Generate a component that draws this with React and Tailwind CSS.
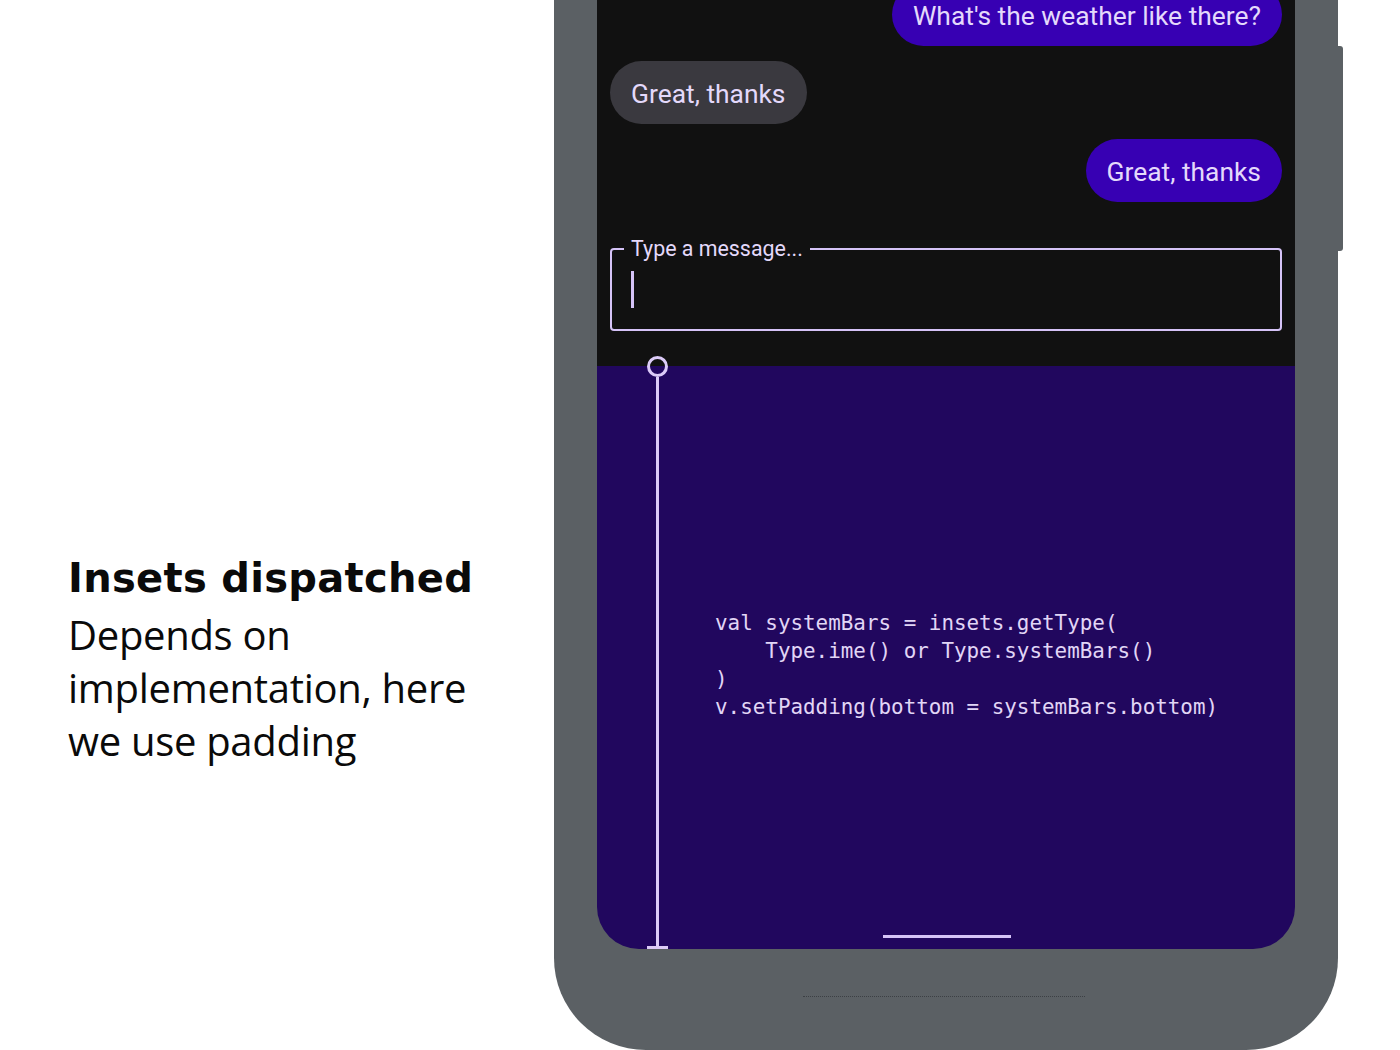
import React from 'react';

const lavender = 'text-[#e4d9fb]';

function Bubble({ text, mine, className }) {
  return (
    <div
      className={`h-[63px] flex items-center px-[21px] pt-[4px] rounded-full text-[26.4px] ${lavender} ${
        mine ? 'self-end bg-[#3700b3]' : 'self-start bg-[#3a393f]'
      } ${className}`}
    >
      {text}
    </div>
  );
}

function MessageField() {
  return (
    <div className="relative mt-[46px] h-[83px] border-2 border-[#d5c3f7] rounded-[4px] px-[19px] pt-[21px]">
      <span className="absolute left-[12px] top-[-13px] bg-[#111111] px-[7px] text-[21.4px] leading-[24px] text-[#e4d9fb]">
        Type a message...
      </span>
      <div className="w-[3px] h-[37px] bg-[#d5c3f7]" />
    </div>
  );
}

function Phone() {
  return (
    <div className="relative w-[784px] h-[1050px] bg-[#5b6064] rounded-b-[92px] px-[43px]">
      {/* side button */}
      <div className="absolute right-[-5px] top-[46px] w-[6px] h-[205px] bg-[#5b6064] rounded-r-[3px]" />

      <div className="relative h-[949px] rounded-b-[42px] overflow-hidden flex flex-col">
        <div className="h-[366px] bg-[#111111] px-[13px] flex flex-col">
          <Bubble text="What's the weather like there?" mine className="mt-[-17px]" />
          <Bubble text="Great, thanks" className="mt-[15px]" />
          <Bubble text="Great, thanks" mine className="mt-[15px]" />
          <MessageField />
        </div>
        <div className="flex-1 bg-[#21075e] flex flex-col items-start pl-[118px] pt-[243px]">
          <pre className="font-['DejaVu_Sans_Mono',monospace] text-[20.9px] leading-[28px] text-[#e1d6f6]">
{`val systemBars = insets.getType(
    Type.ime() or Type.systemBars()
)
v.setPadding(bottom = systemBars.bottom)`}
          </pre>
          <div className="mt-auto mb-[11px] self-center ml-[-116px] w-[128px] h-[3px] bg-[#d5c3f7]" />
        </div>

        {/* inset marker */}
        <div className="absolute left-[49px] top-[356px] bottom-0 w-[22px] flex flex-col items-center">
          <div className="w-[21px] h-[21px] rounded-full border-[3px] border-[#dccbf8]" />
          <div className="w-[3px] flex-1 bg-[#dccbf8]" />
          <div className="w-[21px] h-[3px] bg-[#dccbf8]" />
        </div>
      </div>

      <div className="mt-[47px] ml-[206px] w-[282px] border-t border-dotted border-[#3c4044]" />
    </div>
  );
}

export default function App() {
  return (
    <div className="w-[1400px] h-[1050px] bg-white flex overflow-hidden">
      <div className="w-[554px] pl-[68px] pt-[552px] text-[#0a0a0a]">
        <h1 className="font-['DejaVu_Sans',sans-serif] text-[40px] leading-[53px] font-bold tracking-[0.3px] mb-[3px]">
          Insets dispatched
        </h1>
        <p className="font-['Open_Sans',sans-serif] text-[40px] leading-[53px] tracking-[-0.3px]">
          Depends on
          <br />
          implementation, here
          <br />
          we use padding
        </p>
      </div>
      <div className="font-['Roboto',sans-serif]">
        <Phone />
      </div>
    </div>
  );
}
